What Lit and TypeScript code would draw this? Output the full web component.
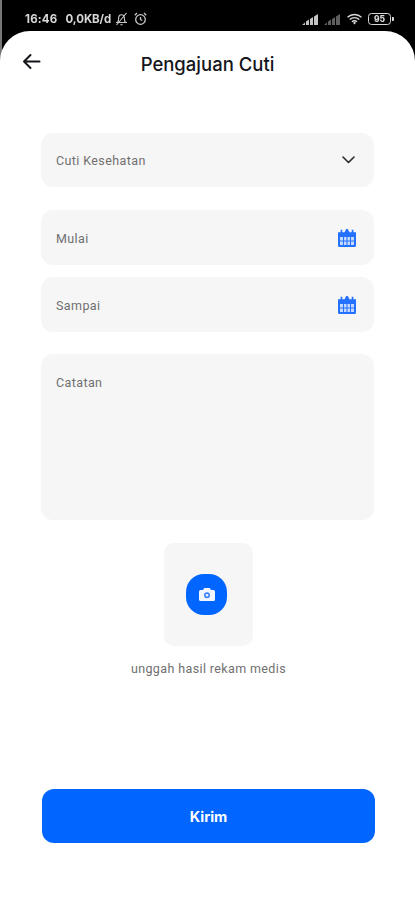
import { LitElement, html, css, svg } from "lit";
import { customElement } from "lit/decorators.js";

const calendar = svg`<svg width="18" height="18" viewBox="0 0 18 18">
  <path fill="#2470ff" d="M0 3.2h2.6V.8h1.700v2.400h2.200L8.200 0h1.600l1.700 3.200h2.200V.8h1.700v2.400H18V16.500A1.500 1.500 0 0 1 16.500 18h-15A1.500 1.500 0 0 1 0 16.500z"/>
  <path fill="#c4d9ff" d="M2 8h14v8H2z"/>
  <path fill="#2470ff" d="M5 8h1v8H5zM8.500 8h1v8h-1zM12 8h1v8h-1zM2 11.500h14v1H2z"/>
</svg>`;

const signal = (fill: string) => svg`<svg width="17" height="11" viewBox="0 0 17 11" fill=${fill}><path d="M0 11l3-2.500V11zM4 7.600l3-2V11H4zM8 5l3-2v8H8zM12 2.400L16 0v11h-4z"/></svg>`;

@customElement("app-root")
export class AppRoot extends LitElement {
  static styles = css`
    :host {
      display: block;
      width: 415px;
      height: 900px;
      background: linear-gradient(to right, #777 0 2px, #000 2px);
      font-family: Inter, "Liberation Sans", sans-serif;
      overflow: hidden;
    }
    .status {
      height: 31px;
      box-sizing: border-box;
      padding: 12px 21px 0 25px;
      display: flex;
      align-items: flex-start;
      justify-content: space-between;
      color: #d8d8d8;
      font-size: 11.5px;
      font-weight: 700;
      line-height: 14px;
      filter: blur(0.35px);
    }
    .status-left, .status-right { display: flex; align-items: center; }
    .status-left { gap: 8px; }
    .status-left .icons { display: flex; gap: 6px; margin-left: -4px; }
    .status-right { gap: 5px; margin-top: 1px; }
    .time { letter-spacing: 0.2px; }
    .speed { letter-spacing: -0.1px; }
    .battery {
      display: flex;
      align-items: center;
      gap: 1px;
    }
    .battery-body {
      width: 23px;
      height: 12px;
      box-sizing: border-box;
      border: 1.5px solid #d8d8d8;
      border-radius: 3.5px;
      display: flex;
      align-items: center;
      justify-content: center;
      font-size: 8.5px;
      line-height: 9px;
      font-weight: 800;
      color: #d8d8d8;
    }
    .battery-tip {
      width: 2px;
      height: 4px;
      border-radius: 0 1px 1px 0;
      background: #d8d8d8;
    }
    .sheet {
      height: 869px;
      box-sizing: border-box;
      background: #fff;
      border-radius: 30px 30px 0 0;
      position: relative;
      display: flex;
      flex-direction: column;
      padding: 0 41px;
    }
    .header {
      height: 64px;
      margin: 0 -41px;
      display: flex;
      align-items: center;
      justify-content: center;
      position: relative;
      font-size: 18.5px;
      font-weight: 500;
      color: #15151c;
      padding-top: 2px;
      box-sizing: border-box;
    }
    .back { position: absolute; left: 22px; top: 22px; }
    .field {
      background: #f6f6f6;
      border-radius: 12px;
      box-sizing: border-box;
      padding: 0 18px 0 15px;
      display: flex;
      align-items: center;
      justify-content: space-between;
      color: #6f6f6f;
      font-family: Roboto, "Liberation Sans", sans-serif;
      font-size: 12.5px;
      letter-spacing: 0.4px;
    }
    .f-select { height: 54px; margin-top: 38px; padding-right: 19px; }
    .f-date { height: 55px; padding-top: 1px; }
    .f-date.first { margin-top: 23px; }
    .f-date.second { margin-top: 12px; }
    .f-note {
      height: 166px;
      margin-top: 22px;
      align-items: flex-start;
      padding-top: 21px;
    }
    .upload {
      align-self: center;
      margin: 23px 0 0 2px;
      width: 89px;
      height: 103px;
      background: #f6f6f6;
      border-radius: 10px;
      display: flex;
      align-items: center;
      justify-content: center;
    }
    .cam {
      width: 41px;
      height: 41px;
      margin-right: 4px;
      background: #0066ff;
      border-radius: 18px;
      display: flex;
      align-items: center;
      justify-content: center;
    }
    .caption {
      align-self: center;
      margin: 15px 0 0 2px;
      font-family: Roboto, "Liberation Sans", sans-serif;
      font-size: 12.5px;
      line-height: 16px;
      letter-spacing: 0.38px;
      color: #6f6f6f;
    }
    .submit {
      margin: 112px -1px 0 1px;
      height: 54px;
      background: #0066ff;
      border: none;
      border-radius: 12px;
      color: #fff;
      font-family: Inter, "Liberation Sans", sans-serif;
      font-size: 14.5px;
      font-weight: 700;
      padding: 0;
    }
  `;

  render() {
    return html`
      <div class="status">
        <div class="status-left">
          <span class="time">16:46</span>
          <span class="speed">0,0KB/d</span>
          <span class="icons">
            <svg width="13" height="14" viewBox="0 0 13 14" fill="none" stroke="#c8c8c8" stroke-width="1.100">
              <path d="M1 10.500h11M2.500 10.500c1.200-1.500 1.200-3 1.200-5a2.800 2.800 0 0 1 5.600 0c0 2 0 3.500 1.200 5M5.300 12.800h2.400M1.500 13L11.500 1"/>
            </svg>
            <svg width="13" height="14" viewBox="0 0 13 14" fill="none" stroke="#c8c8c8" stroke-width="1.300">
              <circle cx="6.500" cy="7.500" r="4.800"/><path d="M6.500 5v2.500l1.700 1M.8 3.200L3 1M12.200 3.200L10 1"/>
            </svg>
          </span>
        </div>
        <div class="status-right">
          ${signal("#c4c4c4")}
          ${signal("#5e5e5e")}
          <svg width="17" height="12" viewBox="0 0 16 12" fill="none" stroke="#d8d8d8" stroke-width="1.400">
            <path d="M1 4.200c4-3.600 10-3.600 14 0M3.200 6.500c2.800-2.300 6.800-2.300 9.600 0M5.400 8.700c1.500-1.100 3.700-1.100 5.200 0"/>
            <path fill="#d8d8d8" stroke="none" d="M6.500 9.800L8 8.800l1.500 1L8 11.500z"/>
          </svg>
          <span class="battery">
            <span class="battery-body">95</span>
            <span class="battery-tip"></span>
          </span>
        </div>
      </div>
      <div class="sheet">
        <div class="header">
          <svg class="back" width="19" height="17" viewBox="0 0 19 17" fill="none" stroke="#15151c" stroke-width="2" stroke-linecap="round" stroke-linejoin="round">
            <path d="M17.500 8.500H2M8.500 2L2 8.500 8.500 15"/>
          </svg>
          Pengajuan Cuti
        </div>
        <div class="field f-select">
          <span>Cuti Kesehatan</span>
          <svg width="13" height="8" viewBox="0 0 13 8" fill="none" stroke="#2a2a2a" stroke-width="1.600" stroke-linecap="round" stroke-linejoin="round"><path d="M1 1l5.500 5.500L12 1"/></svg>
        </div>
        <div class="field f-date first"><span>Mulai</span>${calendar}</div>
        <div class="field f-date second"><span>Sampai</span>${calendar}</div>
        <div class="field f-note"><span>Catatan</span></div>
        <div class="upload">
          <div class="cam">
            <svg width="16" height="13" viewBox="0 0 16 13">
              <path fill="#f2f6ff" d="M5.200 0h5.600l1.200 2h2.500A1.500 1.500 0 0 1 16 3.500V11.500A1.500 1.500 0 0 1 14.500 13h-13A1.500 1.500 0 0 1 0 11.500V3.500A1.500 1.500 0 0 1 1.500 2H4z"/>
              <circle cx="8" cy="7.300" r="3" fill="#3b82ff"/>
              <circle cx="8" cy="7.300" r="1.300" fill="#f2f6ff"/>
            </svg>
          </div>
        </div>
        <div class="caption">unggah hasil rekam medis</div>
        <button class="submit">Kirim</button>
      </div>
    `;
  }
}
